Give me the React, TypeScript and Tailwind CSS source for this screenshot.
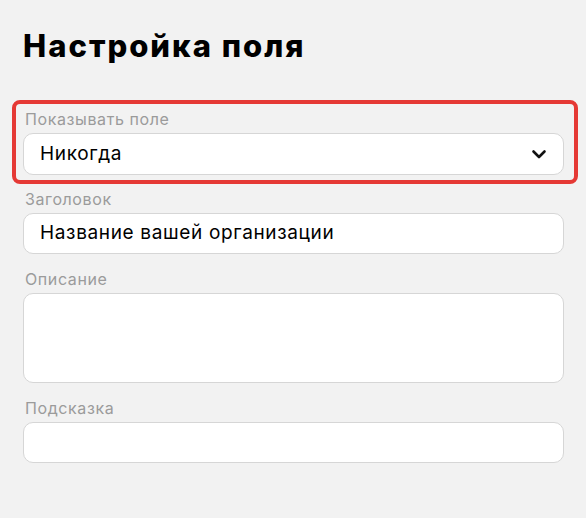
const font = { fontFamily: "Inter, 'Noto Sans', sans-serif" };

function Label({ children }: { children: React.ReactNode }) {
  return (
    <div className="mb-1 pl-[2px] text-[16px] leading-[20px] tracking-[0.6px] text-[#9b9b9b]">
      {children}
    </div>
  );
}

function ChevronDown() {
  return (
    <svg
      width="24"
      height="24"
      viewBox="0 0 24 24"
      fill="none"
      stroke="#111"
      strokeWidth="2.6"
      strokeLinecap="round"
      strokeLinejoin="round"
    >
      <path d="M6.5 9.5l5.5 5.5 5.5-5.5" />
    </svg>
  );
}

export default function App() {
  return (
    <div
      className="min-h-[518px] w-[586px] bg-[#f2f2f2] pl-[23px] pr-[22px] pt-[31px]"
      style={font}
    >
      <h1 className="text-[31px] font-extrabold leading-[30px] tracking-[2px] text-black">
        Настройка поля
      </h1>

      <div className="mt-[48px] flex flex-col gap-[14px]">
        {/* Highlighted field */}
        <div className="relative">
          <div className="pointer-events-none absolute -left-[11px] -right-[14px] -top-[9px] -bottom-[9px] rounded-[8px] border-4 border-[#e53935]" />
          <Label>Показывать поле</Label>
          <div className="flex h-[42px] items-center justify-between rounded-[10px] border border-[#d6d6d6] bg-white pl-4 pr-[12px]">
            <span className="text-[19px] tracking-[0.65px] text-black">Никогда</span>
            <ChevronDown />
          </div>
        </div>

        <div>
          <Label>Заголовок</Label>
          <div className="flex h-[41px] items-center rounded-[10px] border border-[#d6d6d6] bg-white pl-4">
            <span className="text-[19px] tracking-[0.65px] text-black">
              Название вашей организации
            </span>
          </div>
        </div>

        <div className="mt-[1px]">
          <Label>Описание</Label>
          <div className="h-[90px] rounded-[10px] border border-[#d6d6d6] bg-white" />
        </div>

        <div className="mt-[1px]">
          <Label>Подсказка</Label>
          <div className="h-[41px] rounded-[10px] border border-[#d6d6d6] bg-white" />
        </div>
      </div>
    </div>
  );
}
